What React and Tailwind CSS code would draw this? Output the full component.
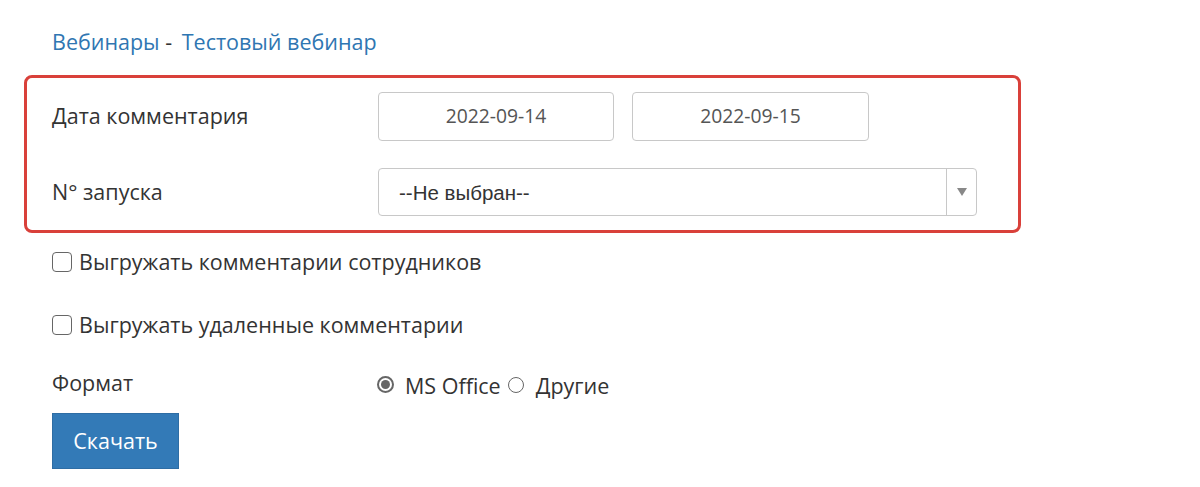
export default function App() {
  return (
    <div className="w-[1200px] h-[487px] bg-white text-[#333] overflow-hidden" style={{ fontFamily: '"Open Sans", "Liberation Sans", sans-serif' }}>
      <div className="pl-[52px] pt-[28px]">
        <div className="text-[21.5px] leading-[28px] h-[28px]">
          <span className="text-[#2f76b2]">Вебинары</span>
          <span className="text-[#333]"> - </span>
          <span className="text-[#2f76b2] ml-[4px]">Тестовый вебинар</span>
        </div>
      </div>
      <div className="ml-[24px] mt-[19px] w-[997px] h-[158px] border-[3px] border-[#d9403a] rounded-[8px] pl-[25px] pt-[14px]">
        <div className="flex items-center h-[49px]">
          <div className="w-[326px] text-[21.5px]">Дата комментария</div>
          <div className="w-[236px] h-[49px] border border-[#c8c8c8] rounded-[4px] flex items-center justify-center text-[19.3px] text-[#555]">2022-09-14</div>
          <div className="ml-[18px] w-[237px] h-[49px] border border-[#c8c8c8] rounded-[4px] flex items-center justify-center text-[19.3px] text-[#555]">2022-09-15</div>
        </div>
        <div className="flex items-center h-[48px] mt-[27px]">
          <div className="w-[326px] text-[21.5px]">N° запуска</div>
          <div className="w-[599px] h-[48px] border border-[#c8c8c8] rounded-[4px] flex items-stretch">
            <div className="flex-1 flex items-center pl-[20px] pt-[2px] text-[20.5px] text-[#333]" style={{ fontFamily: '"Liberation Sans", Arial, sans-serif' }}>--Не выбран--</div>
            <div className="w-[30px] border-l border-[#c8c8c8] flex items-center justify-center">
              <svg width="10" height="8" viewBox="0 0 10 8"><path d="M0 0 L10 0 L5 8 Z" fill="#888" /></svg>
            </div>
          </div>
        </div>
      </div>
      <div className="pl-[52px]">
        <div className="flex items-center mt-[17px] h-[24px]">
          <span className="w-[20px] h-[20px] border-[1.5px] border-[#666] rounded-[4px] inline-block" />
          <span className="ml-[7px] text-[21.5px]">Выгружать комментарии сотрудников</span>
        </div>
        <div className="flex items-center mt-[39px] h-[24px]">
          <span className="w-[20px] h-[20px] border-[1.5px] border-[#666] rounded-[4px] inline-block" />
          <span className="ml-[7px] text-[21.5px]">Выгружать удаленные комментарии</span>
        </div>
        <div className="flex items-center mt-[35px] h-[28px]">
          <div className="w-[325px] text-[21.5px] -mt-[6px]">Формат</div>
          <div className="flex items-center text-[21.5px]">
            <span className="w-[17px] h-[17px] rounded-full border-2 border-[#666] flex items-center justify-center -mt-[3px]">
              <span className="w-[9px] h-[9px] rounded-full bg-[#666]" />
            </span>
            <span className="ml-[11px]">MS Office</span>
            <span className="ml-[7px] w-[16px] h-[16px] rounded-full border-[1.5px] border-[#666] -mt-[3px]" />
            <span className="ml-[12px]">Другие</span>
          </div>
        </div>
        <button className="mt-[13px] w-[127px] h-[56px] bg-[#337ab7] border border-[#2e6da4] text-white text-[21.5px]">Скачать</button>
      </div>
    </div>
  );
}
